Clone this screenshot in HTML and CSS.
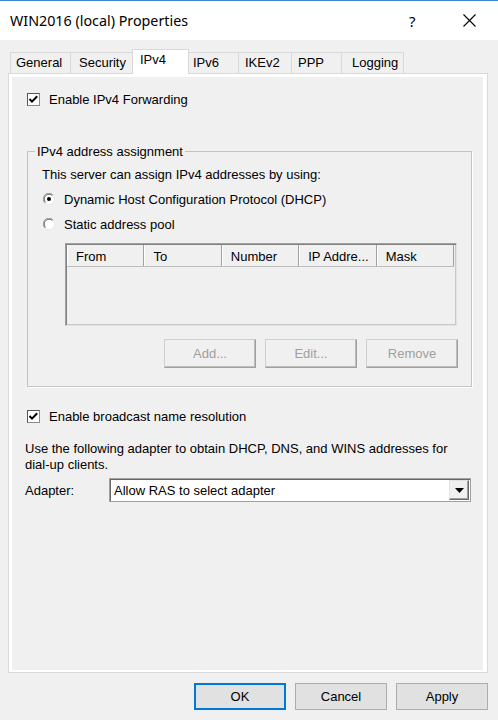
FILE: index.html
```html
<!DOCTYPE html>
<html>
<head>
<meta charset="utf-8">
<title>WIN2016 (local) Properties</title>
<link rel="stylesheet" href="styles.css">
</head>
<body>
<div class="window">
  <div class="titlebar">
    <span class="title">WIN2016 (local) Properties</span>
    <span class="help">?</span>
    <span class="close"><svg width="13" height="13" viewBox="0 0 13 13"><path d="M0.5 0.5L12.5 12.5M12.5 0.5L0.5 12.5" stroke="#000" stroke-width="1.1" fill="none"/></svg></span>
  </div>
  <div class="content">
    <div class="tabs">
      <div class="tab t-general">General</div>
      <div class="tab t-security">Security</div>
      <div class="tab t-ipv4 active">IPv4</div>
      <div class="tab t-ipv6">IPv6</div>
      <div class="tab t-ikev2">IKEv2</div>
      <div class="tab t-ppp">PPP</div>
      <div class="tab t-logging">Logging</div>
    </div>
    <div class="tabpanel">
      <div class="page">
        <label class="check">
          <span class="box"><svg width="11" height="11" viewBox="0 0 11 11"><path d="M1.5 5L4 7.6L9.2 2.2" stroke="#000" stroke-width="2" fill="none"/></svg></span>
          <span class="label">Enable IPv4 Forwarding</span>
        </label>

        <fieldset class="group">
          <legend>IPv4 address assignment</legend>
          <div class="desc">This server can assign IPv4 addresses by using:</div>
          <div class="radio first">
            <svg class="rb" width="12" height="12" viewBox="0 0 12 12">
              <circle cx="6" cy="6" r="5.5" fill="#fff"/>
              <path d="M1.9 10.1A5.5 5.5 0 0 1 10.1 1.9" stroke="#a0a0a0" stroke-width="1" fill="none"/>
              <path d="M2.6 9.4A4.5 4.5 0 0 1 9.4 2.6" stroke="#696969" stroke-width="1" fill="none"/>
              <path d="M10.1 1.9A5.5 5.5 0 0 1 1.9 10.1" stroke="#e8e8e8" stroke-width="1" fill="none"/>
              <circle cx="6" cy="6" r="2" fill="#000"/>
            </svg>
            <span class="label">Dynamic Host Configuration Protocol (DHCP)</span>
          </div>
          <div class="radio second">
            <svg class="rb" width="12" height="12" viewBox="0 0 12 12">
              <circle cx="6" cy="6" r="5.5" fill="#fff"/>
              <path d="M1.9 10.1A5.5 5.5 0 0 1 10.1 1.9" stroke="#a0a0a0" stroke-width="1" fill="none"/>
              <path d="M2.6 9.4A4.5 4.5 0 0 1 9.4 2.6" stroke="#696969" stroke-width="1" fill="none"/>
              <path d="M10.1 1.9A5.5 5.5 0 0 1 1.9 10.1" stroke="#e8e8e8" stroke-width="1" fill="none"/>
            </svg>
            <span class="label">Static address pool</span>
          </div>
          <div class="listview">
            <div class="lv-head">
              <div class="col">From</div>
              <div class="col">To</div>
              <div class="col">Number</div>
              <div class="col">IP Addre...</div>
              <div class="col">Mask</div>
            </div>
          </div>
          <div class="pool-buttons">
            <button class="btn disabled">Add...</button>
            <button class="btn disabled">Edit...</button>
            <button class="btn disabled">Remove</button>
          </div>
        </fieldset>

        <label class="check second">
          <span class="box"><svg width="11" height="11" viewBox="0 0 11 11"><path d="M1.5 5L4 7.6L9.2 2.2" stroke="#000" stroke-width="2" fill="none"/></svg></span>
          <span class="label">Enable broadcast name resolution</span>
        </label>

        <p class="para">Use the following adapter to obtain DHCP, DNS, and WINS addresses for dial-up clients.</p>

        <div class="adapter-row">
          <span class="adapter-label">Adapter:</span>
          <div class="combo">
            <span class="combo-text">Allow RAS to select adapter</span>
            <span class="combo-btn"><svg width="9" height="5" viewBox="0 0 9 5"><path d="M0 0H9L4.5 5Z" fill="#000"/></svg></span>
          </div>
        </div>
      </div>
    </div>
    <div class="footer">
      <button class="btn main default">OK</button>
      <button class="btn main">Cancel</button>
      <button class="btn main">Apply</button>
    </div>
  </div>
</div>
</body>
</html>
```

FILE: styles.css
```css
* { box-sizing: border-box; }
html, body { margin: 0; padding: 0; }
body {
  width: 498px;
  height: 720px;
  overflow: hidden;
  background: #f0f0f0;
  font-family: "Liberation Sans", Arial, sans-serif;
  font-size: 13px;
  color: #000;
}
.window {
  width: 498px;
  height: 720px;
  background: #f0f0f0;
  border-top: 1px solid #3c87d5;
}
.titlebar {
  height: 39px;
  background: #fff;
  display: flex;
  align-items: center;
  padding-left: 10px;
}
.title {
  font-family: "Noto Sans", sans-serif;
  font-size: 14.3px;
}
.help {
  margin-left: auto;
  width: 9px;
  font-family: "Noto Sans", sans-serif;
  font-size: 15px;
  margin-right: 45px;
}
.close {
  display: flex;
  margin-right: 22px;
}
.content {
  padding: 0 10px 0 8px;
}
.tabs {
  display: flex;
  align-items: flex-end;
  height: 33px;
  padding-left: 2px;
}
.tab {
  height: 21px;
  line-height: 20px;
  border: 1px solid #d9d9d9;
  border-bottom: none;
  margin-left: -1px;
  background: #f0f0f0;
  white-space: nowrap;
}
.tab:first-child { margin-left: 0; }
.tab.active {
  height: 25px;
  line-height: 20px;
  background: #fff;
  margin-bottom: -1px;
  position: relative;
  z-index: 1;
}
.t-general { width: 61px; padding-left: 5px; }
.t-security { width: 63px; padding-left: 8px; }
.t-ipv4 { width: 57px; padding-left: 7px; }
.t-ipv6 { width: 51px; padding-left: 4px; }
.t-ikev2 { width: 54px; padding-left: 6px; }
.t-ppp { width: 51px; padding-left: 6px; }
.t-logging { width: 63px; padding-left: 10px; }

.tabpanel {
  width: 480px;
  height: 600px;
  border: 1px solid #d9d9d9;
  background: #fff;
  padding: 3px 4px 2px 3px;
}
.page {
  height: 100%;
  background: #f0f0f0;
  padding: 15px 0 0 13px;
}
.check {
  display: flex;
  align-items: center;
  height: 14px;
  margin-left: 2px;
}
.check.second { margin-top: 22px; }
.box {
  width: 13px;
  height: 13px;
  background: #fff;
  border: 1px solid;
  border-color: #555 #8a8a8a #8a8a8a #555;
  display: flex;
  align-items: center;
  justify-content: center;
}
.check .label { margin-left: 9px; }

.group {
  margin: 38px 0 0 2px;
  width: 445px;
  border: 1px solid #c4c4c4;
  box-shadow: 1px 1px 0 #fff;
  padding: 0 13px 18px 14px;
  min-inline-size: 0;
}
.group legend {
  padding: 0 2px;
  margin-left: -7px;
  line-height: 15px;
}
.desc {
  margin-top: 8px;
  line-height: 16px;
}
.radio {
  display: flex;
  align-items: center;
  height: 24px;
  margin-left: 1px;
}
.radio.first { margin-top: 4px; }
.radio.second { margin-top: 1px; }
.radio .label { margin-left: 9px; }
.rb { flex: none; }

.listview {
  margin: 7px 0 0 23px;
  width: 392px;
  height: 83px;
  background: #f0f0f0;
  border: 1px solid;
  border-color: #a0a0a0 #e3e3e3 #e3e3e3 #a0a0a0;
  box-shadow: inset 1px 1px 0 #828282, inset -1px -1px 0 #c8c8c8;
  padding: 1px 2px 2px 1px;
}
.lv-head {
  display: flex;
  height: 22px;
  border-bottom: 1px solid #bdbdbd;
}
.col {
  width: 78px;
  padding-left: 8px;
  line-height: 23px;
  border-right: 1px solid #a0a0a0;
  border-left: 1px solid #fff;
  white-space: nowrap;
}

.pool-buttons {
  display: flex;
  justify-content: flex-end;
  gap: 9px;
  margin-top: 13px;
}
.btn {
  font-family: "Liberation Sans", Arial, sans-serif;
  font-size: 13px;
  width: 92px;
  height: 29px;
  padding: 0;
  color: #000;
}
.btn.disabled {
  color: #a0a0a0;
  background: #f0f0f0;
  border: 1px solid;
  border-color: #cfcfcf #a0a0a0 #a0a0a0 #cfcfcf;
  box-shadow: inset -1px -1px 0 #bcbcbc;
}

.para {
  margin: 18px 0 0 0;
  width: 440px;
  line-height: 16px;
}
.adapter-row {
  display: flex;
  align-items: center;
  margin-top: 5px;
}
.adapter-label { width: 84px; }
.combo {
  width: 362px;
  height: 24px;
  background: #fff;
  border: 1px solid #a0a0a0;
  box-shadow: inset 1px 1px 0 #696969;
  display: flex;
  align-items: center;
  padding: 1px 1px 1px 4px;
}
.combo-text { flex: 1; }
.combo-btn {
  width: 20px;
  height: 20px;
  background: #f0f0f0;
  border: 1px solid;
  border-color: #e3e3e3 #696969 #696969 #e3e3e3;
  box-shadow: inset -1px -1px 0 #a0a0a0;
  display: flex;
  align-items: center;
  justify-content: center;
}

.footer {
  display: flex;
  justify-content: flex-end;
  gap: 9px;
  margin-top: 10px;
}
.btn.main {
  height: 27px;
  background: #e1e1e1;
  border: 1px solid #adadad;
}
.btn.main.default {
  border: 1px solid #0078d7;
  box-shadow: inset 0 0 0 1px #0078d7;
}
```
